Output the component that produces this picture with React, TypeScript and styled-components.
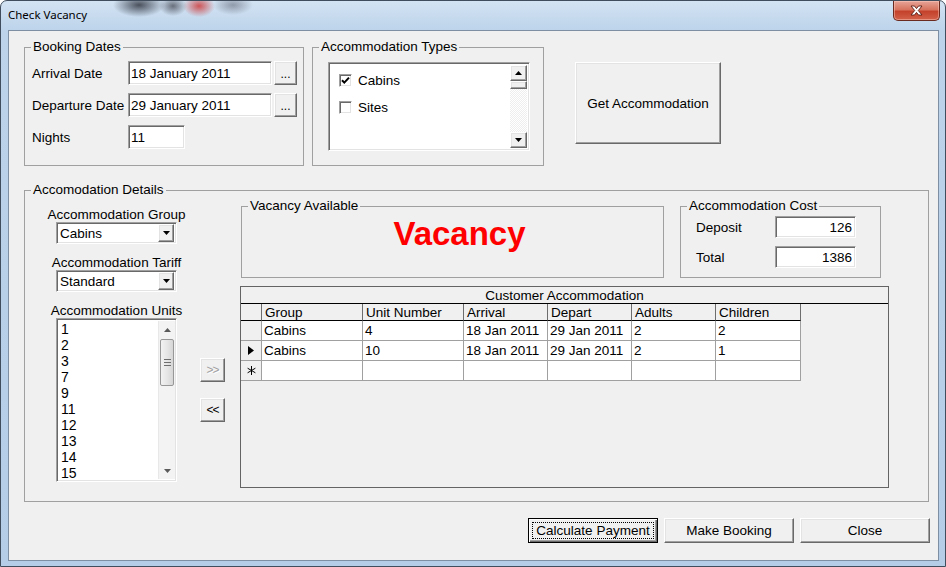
import styled, { createGlobalStyle, css } from 'styled-components'

const GlobalStyle = createGlobalStyle`
  html, body { margin: 0; padding: 0; background: #ffffff; }
  body { font-family: 'Liberation Sans', Arial, sans-serif; font-size: 13.5px; color: #000; }
  * { box-sizing: border-box; }
`

const raised = css`
  border: 1px solid;
  border-color: #ffffff #696969 #696969 #ffffff;
  box-shadow: inset -1px -1px #a0a0a0, inset 1px 1px #e3e3e3;
  background: #f0f0f0;
`

const sunken = css`
  border: 1px solid;
  border-color: #a0a0a0 #ffffff #ffffff #a0a0a0;
  box-shadow: inset 1px 1px #696969, inset -1px -1px #e3e3e3;
  background: #ffffff;
`

const units = ['1', '2', '3', '7', '9', '11', '12', '13', '14', '15']

const rows = [
  { marker: '', group: 'Cabins', unit: '4', arrival: '18 Jan 2011', depart: '29 Jan 2011', adults: '2', children: '2' },
  { marker: 'current', group: 'Cabins', unit: '10', arrival: '18 Jan 2011', depart: '29 Jan 2011', adults: '2', children: '1' },
  { marker: 'new', group: '', unit: '', arrival: '', depart: '', adults: '', children: '' },
]

const columns = ['Group', 'Unit Number', 'Arrival', 'Depart', 'Adults', 'Children']

const Arrow = ({ dir, color = '#000' }: { dir: 'up' | 'down'; color?: string }) => (
  <svg width="7" height="4" viewBox="0 0 7 4">
    <path d={dir === 'down' ? 'M0 0H7L3.5 4Z' : 'M0 4H7L3.5 0Z'} fill={color} />
  </svg>
)

const App = () => {
  return (
    <>
      <GlobalStyle />
      <Window>
        <TitleBar>
          <Title>Check Vacancy</Title>
          <CloseButton>
            <svg width="13" height="11" viewBox="0 0 13 11">
              <path
                d="M1 1H4.5L6.5 3.6L8.5 1H12L8.3 5.5L12 10H8.5L6.5 7.4L4.5 10H1L4.7 5.5Z"
                fill="#ffffff"
                stroke="#5a1c14"
                strokeWidth="0.9"
              />
            </svg>
          </CloseButton>
        </TitleBar>

        <Client>
          <TopRow>
            <Group $w={280} $h={126}>
              <Legend>Booking Dates</Legend>
              <BookingBody>
                <FieldRow>
                  <FieldLabel $w={96}>Arrival Date</FieldLabel>
                  <TextBox $w={144} $h={24}>18 January 2011</TextBox>
                  <DotsButton>...</DotsButton>
                </FieldRow>
                <FieldRow>
                  <FieldLabel $w={96}>Departure Date</FieldLabel>
                  <TextBox $w={144} $h={24}>29 January 2011</TextBox>
                  <DotsButton>...</DotsButton>
                </FieldRow>
                <FieldRow>
                  <FieldLabel $w={96}>Nights</FieldLabel>
                  <TextBox $w={57} $h={24}>11</TextBox>
                </FieldRow>
              </BookingBody>
            </Group>

            <Group $w={232} $h={126} style={{ marginLeft: 8 }}>
              <Legend>Accommodation Types</Legend>
              <TypesBody>
                <CheckList>
                  <CheckItems>
                    <CheckRow>
                      <CheckBox>
                        <svg width="9" height="9" viewBox="0 0 9 9">
                          <path d="M1 4.2L3.3 6.6L8 1.6" fill="none" stroke="#000" strokeWidth="2" />
                        </svg>
                      </CheckBox>
                      Cabins
                    </CheckRow>
                    <CheckRow>
                      <CheckBox />
                      Sites
                    </CheckRow>
                  </CheckItems>
                  <ClassicScroll>
                    <ClassicArrow>
                      <Arrow dir="up" />
                    </ClassicArrow>
                    <ClassicThumb />
                    <ClassicTrack />
                    <ClassicArrow>
                      <Arrow dir="down" />
                    </ClassicArrow>
                  </ClassicScroll>
                </CheckList>
              </TypesBody>
            </Group>

            <BigButton>Get Accommodation</BigButton>
          </TopRow>

          <Group $w={905} $h={319} style={{ marginTop: 17 }}>
            <Legend>Accomodation Details</Legend>
            <DetailsBody>
              <LeftColumn>
                <ColLabel>Accommodation Group</ColLabel>
                <Combo>
                  <ComboText>Cabins</ComboText>
                  <ComboButton>
                    <Arrow dir="down" />
                  </ComboButton>
                </Combo>
                <ColLabel $gap={11}>Accommodation Tariff</ColLabel>
                <Combo>
                  <ComboText>Standard</ComboText>
                  <ComboButton>
                    <Arrow dir="down" />
                  </ComboButton>
                </Combo>
                <ColLabel $gap={11}>Accommodation Units</ColLabel>
                <UnitsList>
                  <UnitItems>
                    {units.map((u) => (
                      <UnitItem key={u}>{u}</UnitItem>
                    ))}
                  </UnitItems>
                  <ThemedScroll>
                    <ThemedArrow>
                      <Arrow dir="up" color="#5a5a5a" />
                    </ThemedArrow>
                    <ThemedTrack>
                      <ThemedThumb>
                        <Grip />
                        <Grip />
                        <Grip />
                      </ThemedThumb>
                    </ThemedTrack>
                    <ThemedArrow>
                      <Arrow dir="down" color="#5a5a5a" />
                    </ThemedArrow>
                  </ThemedScroll>
                </UnitsList>
              </LeftColumn>

              <MoverColumn>
                <MoveButton $disabled>&gt;&gt;</MoveButton>
                <MoveButton>&lt;&lt;</MoveButton>
              </MoverColumn>

              <RightArea>
                <InfoRow>
                  <Group $w={423} $h={79} style={{ marginLeft: 1 }}>
                    <Legend>Vacancy Available</Legend>
                    <VacancyText>Vacancy</VacancyText>
                  </Group>
                  <Group $w={201} $h={79} style={{ marginLeft: 16 }}>
                    <Legend>Accommodation Cost</Legend>
                    <CostBody>
                      <FieldRow>
                        <FieldLabel $w={79}>Deposit</FieldLabel>
                        <TextBox $w={81} $h={22} $right>126</TextBox>
                      </FieldRow>
                      <FieldRow $gap={8}>
                        <FieldLabel $w={79}>Total</FieldLabel>
                        <TextBox $w={81} $h={22} $right>1386</TextBox>
                      </FieldRow>
                    </CostBody>
                  </Group>
                </InfoRow>

                <GridBox>
                  <Caption>Customer Accommodation</Caption>
                  <GridTable>
                    <HeadCell />
                    {columns.map((c) => (
                      <HeadCell key={c}>{c}</HeadCell>
                    ))}
                    {rows.map((r, i) => (
                      <GridRowGroup key={i}>
                        <RowHead>
                          {r.marker === 'current' && (
                            <svg width="6" height="9" viewBox="0 0 6 9">
                              <path d="M0 0L6 4.5L0 9Z" fill="#000" />
                            </svg>
                          )}
                          {r.marker === 'new' && (
                            <svg width="9" height="9" viewBox="0 0 9 9">
                              <path d="M4.5 0V9M0.6 2.2L8.4 6.8M0.6 6.8L8.4 2.2" stroke="#000" strokeWidth="1" />
                            </svg>
                          )}
                        </RowHead>
                        <Cell>{r.group}</Cell>
                        <Cell>{r.unit}</Cell>
                        <Cell>{r.arrival}</Cell>
                        <Cell>{r.depart}</Cell>
                        <Cell>{r.adults}</Cell>
                        <Cell>{r.children}</Cell>
                      </GridRowGroup>
                    ))}
                  </GridTable>
                </GridBox>
              </RightArea>
            </DetailsBody>
          </Group>

          <ButtonRow>
            <DialogButton $default>
              <FocusRect>Calculate Payment</FocusRect>
            </DialogButton>
            <DialogButton>Make Booking</DialogButton>
            <DialogButton>Close</DialogButton>
          </ButtonRow>
        </Client>
      </Window>
    </>
  )
}

export default App

const Window = styled.div`
  width: 946px;
  height: 567px;
  display: flex;
  flex-direction: column;
  border: 1px solid #3f4d5d;
  border-radius: 7px 7px 0 0;
  overflow: hidden;
  background:
    radial-gradient(ellipse 26px 12px at 138px 4px, rgba(40, 44, 55, 0.8), transparent),
    radial-gradient(ellipse 14px 10px at 172px 5px, rgba(50, 50, 60, 0.65), transparent),
    radial-gradient(ellipse 16px 11px at 198px 5px, rgba(205, 60, 60, 0.85), transparent),
    radial-gradient(ellipse 20px 10px at 232px 4px, rgba(90, 95, 110, 0.55), transparent),
    linear-gradient(180deg, #d3e3f3 0px, #bcd3ea 30px, #b5cde7 100%);
`

const TitleBar = styled.div`
  height: 29px;
  display: flex;
  align-items: flex-start;
  justify-content: space-between;
  padding-left: 7px;
`

const Title = styled.div`
  font-family: 'Noto Sans', 'Open Sans', sans-serif;
  font-size: 11.5px;
  line-height: 28px;
  color: #000;
`

const CloseButton = styled.div`
  width: 47px;
  height: 20px;
  margin-right: 5px;
  display: flex;
  align-items: center;
  justify-content: center;
  border: 1px solid #6b2a20;
  border-top: none;
  border-radius: 0 0 5px 5px;
  background: linear-gradient(180deg, #e6a497 0%, #d77460 45%, #c4422b 55%, #d2614a 100%);
  box-shadow: inset 0 0 0 1px rgba(255, 210, 200, 0.45);
`

const Client = styled.div`
  flex: 1;
  margin: 0 6px 5px 7px;
  background: #f0f0f0;
  border: 1px solid #7f8fa3;
  display: flex;
  flex-direction: column;
  padding: 9px 8px 0 15px;
`

const TopRow = styled.div`
  display: flex;
  align-items: flex-start;
`

const Group = styled.fieldset<{ $w: number; $h: number }>`
  margin: 0;
  padding: 0;
  min-width: 0;
  width: ${({ $w }) => $w}px;
  height: ${({ $h }) => $h}px;
  border: 1px solid #a0a0a0;
  flex-shrink: 0;
`

const Legend = styled.legend`
  margin-left: 6px;
  padding: 0 2px 0 2px;
  font-size: 13.5px;
  line-height: 14px;
  color: #000;
`

const BookingBody = styled.div`
  padding: 7px 0 0 7px;
`

const FieldRow = styled.div<{ $gap?: number }>`
  display: flex;
  align-items: center;
  & + & {
    margin-top: ${({ $gap }) => $gap ?? 9}px;
  }
`

const FieldLabel = styled.span<{ $w: number }>`
  width: ${({ $w }) => $w}px;
  white-space: nowrap;
`

const TextBox = styled.div<{ $w: number; $h: number; $right?: boolean }>`
  ${sunken};
  width: ${({ $w }) => $w}px;
  height: ${({ $h }) => $h}px;
  display: flex;
  align-items: center;
  justify-content: ${({ $right }) => ($right ? 'flex-end' : 'flex-start')};
  padding: 0 3px 0 2px;
  white-space: nowrap;
`

const DotsButton = styled.div`
  ${raised};
  width: 23px;
  height: 24px;
  margin-left: 2px;
  display: flex;
  align-items: flex-end;
  justify-content: center;
  padding-bottom: 5px;
  font-size: 12px;
  line-height: 10px;
`

const TypesBody = styled.div`
  padding: 8px 0 0 15px;
`

const CheckList = styled.div`
  ${sunken};
  width: 202px;
  height: 89px;
  display: flex;
  padding: 2px;
`

const CheckItems = styled.div`
  flex: 1;
  padding: 2px 0 0 8px;
`

const CheckRow = styled.div`
  height: 27px;
  display: flex;
  align-items: center;
  gap: 6px;
`

const CheckBox = styled.div`
  ${sunken};
  width: 13px;
  height: 13px;
  display: flex;
  align-items: center;
  justify-content: center;
`

const ClassicScroll = styled.div`
  width: 17px;
  display: flex;
  flex-direction: column;
  background: #f4f4f4;
`

const ClassicArrow = styled.div`
  ${raised};
  height: 16px;
  display: flex;
  align-items: center;
  justify-content: center;
`

const ClassicThumb = styled.div`
  ${raised};
  height: 8px;
`

const ClassicTrack = styled.div`
  flex: 1;
  background: repeating-conic-gradient(#ffffff 0 25%, #eeeeee 0 50%) 0 0 / 2px 2px;
`

const BigButton = styled.div`
  ${raised};
  width: 146px;
  height: 82px;
  margin: 22px 0 0 31px;
  display: flex;
  align-items: center;
  justify-content: center;
`

const DetailsBody = styled.div`
  display: flex;
  align-items: flex-start;
  padding: 2px 0 0 31px;
`

const LeftColumn = styled.div`
  width: 121px;
  margin-top: 8px;
  display: flex;
  flex-direction: column;
  align-items: center;
`

const ColLabel = styled.div<{ $gap?: number }>`
  line-height: 15px;
  white-space: nowrap;
  margin-top: ${({ $gap }) => $gap ?? 0}px;
`

const Combo = styled.div`
  ${sunken};
  width: 121px;
  height: 22px;
  display: flex;
  align-items: center;
  padding: 2px;
`

const ComboText = styled.span`
  flex: 1;
  padding-left: 1px;
`

const ComboButton = styled.div`
  ${raised};
  width: 16px;
  height: 18px;
  display: flex;
  align-items: center;
  justify-content: center;
`

const UnitsList = styled.div`
  ${sunken};
  width: 121px;
  height: 164px;
  display: flex;
  padding: 2px 1px 2px 2px;
`

const UnitItems = styled.div`
  flex: 1;
  padding-left: 2px;
`

const UnitItem = styled.div`
  height: 16px;
  line-height: 16px;
  font-size: 14px;
`

const ThemedScroll = styled.div`
  width: 17px;
  display: flex;
  flex-direction: column;
  background: #f3f3f3;
  border-left: 1px solid #e8e8e8;
`

const ThemedArrow = styled.div`
  height: 17px;
  display: flex;
  align-items: center;
  justify-content: center;
`

const ThemedTrack = styled.div`
  flex: 1;
  padding: 1px 1px 0 1px;
`

const ThemedThumb = styled.div`
  height: 47px;
  border: 1px solid #979797;
  border-radius: 2px;
  background: linear-gradient(90deg, #f2f2f2 0%, #e6e6e6 50%, #d6d6d6 100%);
  display: flex;
  flex-direction: column;
  align-items: center;
  justify-content: center;
  gap: 2px;
`

const Grip = styled.div`
  width: 7px;
  height: 1px;
  background: #6e6e6e;
`

const MoverColumn = styled.div`
  display: flex;
  flex-direction: column;
  gap: 16px;
  margin-left: 23px;
  padding-top: 159px;
`

const MoveButton = styled.div<{ $disabled?: boolean }>`
  ${raised};
  width: 25px;
  height: 24px;
  display: flex;
  align-items: center;
  justify-content: center;
  font-size: 12px;
  letter-spacing: -1px;
  color: ${({ $disabled }) => ($disabled ? '#a0a0a0' : '#000')};
  text-shadow: ${({ $disabled }) => ($disabled ? '1px 1px #ffffff' : 'none')};
`

const RightArea = styled.div`
  width: 649px;
  margin-left: 15px;
`

const InfoRow = styled.div`
  display: flex;
`

const VacancyText = styled.div`
  text-align: center;
  padding: 2px 0 0 14px;
  font-size: 33px;
  line-height: 38px;
  font-weight: bold;
  color: #ff0000;
`

const CostBody = styled.div`
  padding: 3px 0 0 15px;
`

const GridBox = styled.div`
  width: 649px;
  height: 202px;
  margin-top: 8px;
  border: 1px solid #646464;
  background: #f0f0f0;
`

const Caption = styled.div`
  height: 17px;
  border-bottom: 1px solid #000;
  text-align: center;
  line-height: 14px;
  padding-top: 2px;
`

const GridTable = styled.div`
  display: grid;
  grid-template-columns: 21px 101px 101px 84px 84px 84px 85px;
  width: 560px;
`

const GridRowGroup = styled.div`
  display: contents;
`

const HeadCell = styled.div`
  height: 17px;
  border-right: 1px solid #6d6d6d;
  border-bottom: 1px solid #000;
  padding: 2px 0 0 3px;
  line-height: 14px;
  white-space: nowrap;
  background: #f0f0f0;
`

const RowHead = styled.div`
  height: 20px;
  border-right: 1px solid #a0a0a0;
  border-bottom: 1px solid #a0a0a0;
  background: #f0f0f0;
  display: flex;
  align-items: center;
  justify-content: center;
`

const Cell = styled.div`
  height: 20px;
  border-right: 1px solid #a0a0a0;
  border-bottom: 1px solid #a0a0a0;
  background: #ffffff;
  padding: 2px 0 0 2px;
  line-height: 15px;
  white-space: nowrap;
`

const ButtonRow = styled.div`
  display: flex;
  justify-content: flex-end;
  gap: 6px;
  margin-top: 16px;
`

const DialogButton = styled.div<{ $default?: boolean }>`
  width: 130px;
  height: 25px;
  display: flex;
  align-items: center;
  justify-content: center;
  background: #f0f0f0;
  ${({ $default }) =>
    $default
      ? css`
          border: 1px solid #000;
          box-shadow: inset 1px 1px #ffffff, inset -1px -1px #696969, inset -2px -2px #a0a0a0;
          padding: 3px;
        `
      : raised}
`

const FocusRect = styled.span`
  flex: 1;
  align-self: stretch;
  display: flex;
  align-items: center;
  justify-content: center;
  border: 1px dotted #000;
`
